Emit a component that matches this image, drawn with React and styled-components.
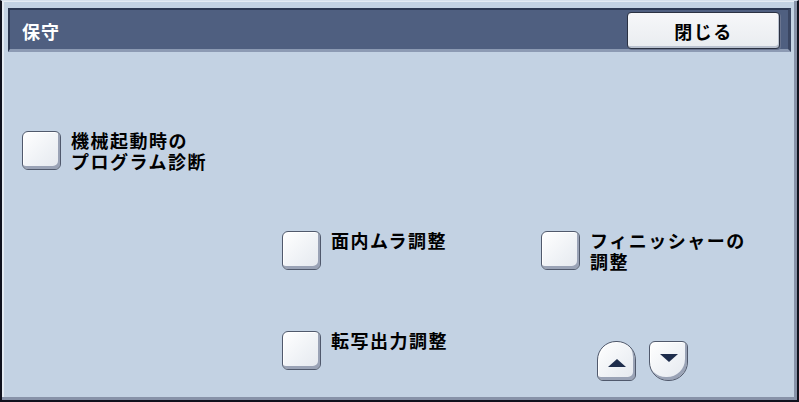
import React from 'react';
import styled, { createGlobalStyle } from 'styled-components';

const GlobalStyle = createGlobalStyle`
  html, body {
    margin: 0;
    padding: 0;
    background: #c3d2e3;
  }
  * {
    box-sizing: border-box;
  }
`;

const Frame = styled.div`
  width: 799px;
  height: 402px;
  display: flex;
  flex-direction: column;
  background: #c3d2e3;
  border-style: solid;
  border-width: 1px 2px 2px 2px;
  border-color: #d6e0ec #10121e #10121e #10121e;
  box-shadow: inset -3px -3px 0 #8792a8, inset 2px 1px 0 #e4ebf3;
  font-family: "Noto Sans CJK JP", "Noto Sans", sans-serif;
  font-weight: 700;
  overflow: hidden;
`;

const Header = styled.div`
  margin: 7px 6px 0 6px;
  height: 45px;
  display: flex;
  align-items: center;
  justify-content: space-between;
  padding: 0 8px 0 12px;
  background: #4f5f80;
  border-style: solid;
  border-width: 2px 3px 3px 2px;
  border-color: #2c3852 #3a4662 #8c9ab3 #2c3852;
`;

const Title = styled.div`
  color: #ffffff;
  font-size: 18px;
  letter-spacing: 1px;
  line-height: 21px;
  margin-top: 4px;
`;

const CloseButton = styled.button`
  width: 153px;
  height: 37px;
  margin-top: 2px;
  border: 1px solid #2a3142;
  border-radius: 4px;
  background: linear-gradient(#f6f7f9, #e9ecf0);
  box-shadow: inset -1px -2px 0 #b9c1cf, 1px 1px 0 #6a7590;
  font-family: inherit;
  font-weight: 700;
  font-size: 18px;
  letter-spacing: 1.5px;
  color: #000;
  padding: 0;
`;

const Body = styled.div`
  flex: 1;
  display: grid;
  grid-template-columns: 260px 259px 1fr;
  grid-auto-rows: 100px;
  padding: 79px 0 0 20px;
`;

const Item = styled.div`
  display: flex;
  align-items: flex-start;
  gap: 10px;
  grid-column: ${p => p.col};
  grid-row: ${p => p.row};
`;

const Box = styled.div`
  flex: none;
  width: 39px;
  height: 39px;
  border: 1px solid #50596c;
  border-radius: 6px;
  background: linear-gradient(135deg, #ffffff 0%, #eef1f5 60%, #e4e8ee 100%);
  box-shadow: inset -2px -3px 0 #9aa3b6, inset 1px 1px 0 #ffffff;
`;

const Label = styled.div`
  font-size: 18px;
  letter-spacing: 1.5px;
  line-height: 21px;
  color: #000;
  margin-top: -1px;
  white-space: nowrap;
`;

const Arrows = styled.div`
  grid-column: 3;
  grid-row: 3;
  display: flex;
  gap: 13px;
  padding: 10px 0 0 56px;
  align-items: flex-start;
`;

const ArrowButton = styled.div`
  width: 39px;
  height: 40px;
  display: flex;
  align-items: center;
  justify-content: center;
  border: 1px solid #50596c;
  border-radius: ${p => (p.up ? '19px 19px 6px 6px' : '6px 6px 19px 19px')};
  background: linear-gradient(135deg, #ffffff 0%, #eef1f5 60%, #e4e8ee 100%);
  box-shadow: inset -2px -3px 0 #9aa3b6, inset 1px 1px 0 #ffffff;
  padding-top: ${p => (p.up ? '4px' : '0')};
  padding-bottom: ${p => (p.up ? '0' : '6px')};
`;

const Triangle = styled.div`
  width: 0;
  height: 0;
  border-left: 9px solid transparent;
  border-right: 9px solid transparent;
  ${p => (p.up
    ? 'border-bottom: 8px solid #1e2d4c;'
    : 'border-top: 8px solid #1e2d4c;')}
`;

const items = [
  { row: 1, col: 1, lines: ['機械起動時の', 'プログラム診断'] },
  { row: 2, col: 2, lines: ['面内ムラ調整'] },
  { row: 2, col: 3, lines: ['フィニッシャーの', '調整'] },
  { row: 3, col: 2, lines: ['転写出力調整'] },
];

export default function App() {
  return (
    <>
      <GlobalStyle />
      <Frame>
        <Header>
          <Title>保守</Title>
          <CloseButton>閉じる</CloseButton>
        </Header>
        <Body>
          {items.map(it => (
            <Item key={it.lines[0]} row={it.row} col={it.col}>
              <Box />
              <Label>
                {it.lines.map(l => (
                  <div key={l}>{l}</div>
                ))}
              </Label>
            </Item>
          ))}
          <Arrows>
            <ArrowButton up>
              <Triangle up />
            </ArrowButton>
            <ArrowButton>
              <Triangle />
            </ArrowButton>
          </Arrows>
        </Body>
      </Frame>
    </>
  );
}
